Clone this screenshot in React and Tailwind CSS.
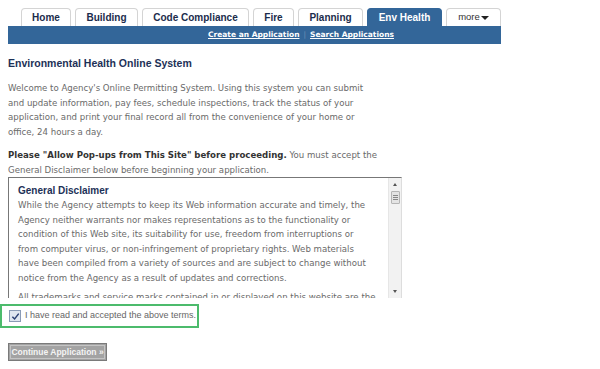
const tabs = [
  { label: "Home", w: "w-[50px]" },
  { label: "Building", w: "w-[63px]" },
  { label: "Code Compliance", w: "w-[107px]" },
  { label: "Fire", w: "w-[41px]" },
  { label: "Planning", w: "w-[65px]" },
  { label: "Env Health", w: "w-[75px]", active: true },
];

const welcome = [
  "Welcome to Agency's Online Permitting System. Using this system you can submit",
  "and update information, pay fees, schedule inspections, track the status of your",
  "application, and print your final record all from the convenience of your home or",
  "office, 24 hours a day.",
];

const disclaimer = [
  "While the Agency attempts to keep its Web information accurate and timely, the",
  "Agency neither warrants nor makes representations as to the functionality or",
  "condition of this Web site, its suitability for use, freedom from interruptions or",
  "from computer virus, or non-infringement of proprietary rights. Web materials",
  "have been compiled from a variety of sources and are subject to change without",
  "notice from the Agency as a result of updates and corrections.",
];

export default function App() {
  return (
    <div className="w-[600px] h-[369px] bg-white overflow-hidden font-['DejaVu_Sans',sans-serif]">
      {/* Tabs */}
      <div className="flex gap-[4px] pl-[21px] pt-[8px] h-[26px] font-['Liberation_Sans',Arial,sans-serif]">
        {tabs.map((t) => (
          <div
            key={t.label}
            className={`${t.w} h-[18px] flex items-center justify-center rounded-t-[4px] text-[10px] font-bold ${
              t.active
                ? "bg-[#336699] text-white border border-b-0 border-[#336699]"
                : "bg-white text-[#1b2c4c] border border-b-0 border-[#d4d4d4]"
            }`}
          >
            {t.label}
          </div>
        ))}
        <div className="w-[55px] h-[18px] flex items-center justify-center rounded-t-[4px] border border-b-0 border-[#d4d4d4] text-[9.5px] text-[#333]">
          more
          <span className="ml-[1px] w-0 h-0 border-l-[4px] border-r-[4px] border-t-[4px] border-l-transparent border-r-transparent border-t-[#222]" />
        </div>
      </div>

      {/* Sub nav */}
      <div className="ml-[8px] w-[493px] h-[18px] bg-[#336699] flex items-center pl-[200px] text-[7.5px] font-bold text-white">
        <span className="underline">Create an Application</span>
        <span className="mx-[4px] text-[#6f93b8] font-normal">|</span>
        <span className="underline">Search Applications</span>
      </div>

      <div className="px-[8px]">
        <h1 className="mt-[13px] text-[10.5px] leading-[12px] font-bold text-[#1d3157] font-['Liberation_Sans',Arial,sans-serif]">
          Environmental Health Online System
        </h1>

        <div className="mt-[12px] text-[8.6px] leading-[14.5px] text-[#6a6a6a] whitespace-nowrap">
          {welcome.map((l) => (
            <div key={l}>{l}</div>
          ))}
        </div>

        <div className="mt-[9px] text-[8.6px] leading-[14.5px] text-[#6a6a6a] whitespace-nowrap">
          <div>
            <span className="font-bold text-[#333]">Please "Allow Pop-ups from This Site" before proceeding.</span>{" "}
            You must accept the
          </div>
          <div>General Disclaimer below before beginning your application.</div>
        </div>

        {/* Disclaimer box */}
        <div className="w-[394px] h-[121px] flex border-t-[1.5px] border-l border-[#777] border-r border-r-[#ddd] overflow-hidden">
          <div className="flex-1 pl-[9px] pt-[6px] text-[8.6px] leading-[14.5px] text-[#6a6a6a] whitespace-nowrap overflow-hidden">
            <div className="text-[10px] leading-[14px] font-bold text-[#1d3157] font-['Liberation_Sans',Arial,sans-serif]">
              General Disclaimer
            </div>
            {disclaimer.map((l) => (
              <div key={l}>{l}</div>
            ))}
            <div className="mt-[5px]">All trademarks and service marks contained in or displayed on this website are the</div>
          </div>
          {/* scrollbar */}
          <div className="w-[13px] shrink-0 bg-[#f2f2f2] border-l border-[#e6e6e6] flex flex-col items-center">
            <span className="mt-[5px] w-0 h-0 border-l-[2px] border-r-[2px] border-b-[3px] border-l-transparent border-r-transparent border-b-[#555]" />
            <div className="mt-[5px] w-[9px] h-[13px] bg-[#e4e4e4] border border-[#b5b5b5] rounded-[1px] flex flex-col items-center justify-center gap-[1px]">
              <span className="w-[5px] h-px bg-[#888]" />
              <span className="w-[5px] h-px bg-[#888]" />
              <span className="w-[5px] h-px bg-[#888]" />
            </div>
            <span className="mt-auto mb-[5px] w-0 h-0 border-l-[2px] border-r-[2px] border-t-[3px] border-l-transparent border-r-transparent border-t-[#555]" />
          </div>
        </div>
      </div>

      {/* Accept checkbox */}
      <div className="mt-[6px] w-[199px] h-[24px] border-2 border-[#4cbb6c] flex items-center pl-[7px]">
        <span className="w-[12px] h-[12px] border border-[#8a9bb5] bg-[#dfe6f0] flex items-center justify-center">
          <svg viewBox="0 0 10 10" className="w-[9px] h-[9px]">
            <path d="M1.5 5.2 L4 7.8 L8.6 1.8" fill="none" stroke="#2a3f73" strokeWidth="1.6" />
          </svg>
        </span>
        <span className="ml-[4px] text-[9px] text-[#666] font-['Liberation_Sans',Arial,sans-serif]">
          I have read and accepted the above terms.
        </span>
      </div>

      {/* Continue button */}
      <div className="ml-[8px] mt-[15px] w-[99px] h-[18px] border border-[#7a7a7a] bg-[#a3a3a3] p-[1px]">
        <div className="h-full border border-[#c4c4c4] flex items-center justify-center text-[8.5px] font-bold text-[#f4f4f4] font-['Liberation_Sans',Arial,sans-serif]">
          Continue Application »
        </div>
      </div>
    </div>
  );
}
